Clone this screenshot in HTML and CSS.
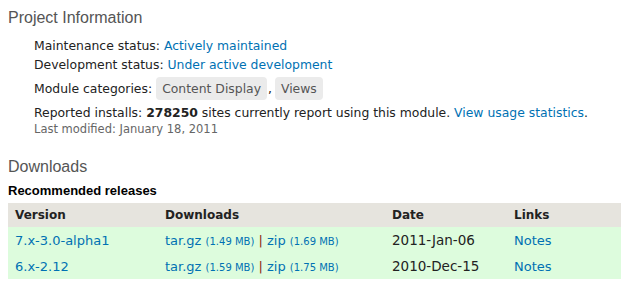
FILE: index.html
```html
<!DOCTYPE html>
<html lang="en">
<head>
    <meta charset="UTF-8">
    <title>Project Information</title>
    <link rel="stylesheet" href="styles.css">
</head>
<body>

    <!-- Project Information -->
    <h2 class="section-title">Project Information</h2>
    <div class="project-info">
        <div class="info-line">Maintenance status: <a href="#">Actively maintained</a></div>
        <div class="info-line">Development status: <a href="#">Under active development</a></div>
        <div class="info-line categories">
            <span>Module categories:</span>
            <a class="tag" href="#">Content Display</a><span class="comma">,</span>
            <a class="tag" href="#">Views</a>
        </div>
        <div class="info-line">Reported installs: <strong>278250</strong> sites currently report using this module. <a href="#">View usage statistics</a>.</div>
        <div class="info-line modified">Last modified: January 18, 2011</div>
    </div>

    <!-- Downloads -->
    <h2 class="section-title downloads-title">Downloads</h2>
    <h3 class="releases-title">Recommended releases</h3>
    <table class="releases">
        <thead>
            <tr>
                <th class="col-version">Version</th>
                <th class="col-downloads">Downloads</th>
                <th class="col-date">Date</th>
                <th>Links</th>
            </tr>
        </thead>
        <tbody>
            <tr>
                <td><a href="#">7.x-3.0-alpha1</a></td>
                <td><a href="#">tar.gz</a> <span class="size">(1.49 MB)</span> <span class="sep">|</span> <a href="#">zip</a> <span class="size">(1.69 MB)</span></td>
                <td class="date">2011-Jan-06</td>
                <td><a href="#">Notes</a></td>
            </tr>
            <tr>
                <td><a href="#">6.x-2.12</a></td>
                <td><a href="#">tar.gz</a> <span class="size">(1.59 MB)</span> <span class="sep">|</span> <a href="#">zip</a> <span class="size">(1.75 MB)</span></td>
                <td class="date">2010-Dec-15</td>
                <td><a href="#">Notes</a></td>
            </tr>
        </tbody>
    </table>

</body>
</html>
```

FILE: styles.css
```css
/* General */
body {
    margin: 0;
    padding: 6px 10px 0 8px;
    font-family: "DejaVu Sans", sans-serif;
    font-size: 12.4px;
    color: #222;
    background: #fff;
}

a {
    color: #0071b3;
    text-decoration: none;
}

/* Headings */
.section-title {
    font-family: "Liberation Sans", Arial, sans-serif;
    font-size: 16px;
    font-weight: normal;
    color: #555;
    line-height: 24px;
    margin: 0 0 6px;
}

.downloads-title {
    margin: 18px 0 4px;
}

.releases-title {
    font-family: "Liberation Sans", Arial, sans-serif;
    font-size: 13px;
    font-weight: bold;
    color: #000;
    line-height: 16px;
    margin: 0 0 4px;
}

/* Project info */
.project-info {
    padding-left: 26px;
}

.info-line {
    line-height: 19px;
}

.categories {
    display: flex;
    align-items: center;
    margin: 3px 0;
}

.tag {
    background: #ebebeb;
    color: #555;
    border-radius: 4px;
    padding: 3px 6px;
    line-height: 17px;
}

.categories span:first-child {
    margin-right: 4px;
}

.comma {
    margin: 0 3px 0 1px;
}

.modified {
    font-size: 11.5px;
    color: #666;
    line-height: 15px;
}

/* Releases table */
.releases {
    width: 613px;
    border-collapse: collapse;
}

.releases th {
    background: #e6e4de;
    text-align: left;
    font-size: 12px;
    font-weight: bold;
    height: 24px;
    padding: 0 7px;
}

.releases td {
    background: #ddfcdd;
    font-size: 13px;
    height: 26px;
    padding: 0 7px;
}

.releases td.date {
    font-size: 13.5px;
}

.col-version { width: 136px; }
.col-downloads { width: 213px; }
.col-date { width: 108px; }

.size {
    font-size: 10px;
    color: #0071b3;
}

.sep {
    color: #8a2a10;
}
```
